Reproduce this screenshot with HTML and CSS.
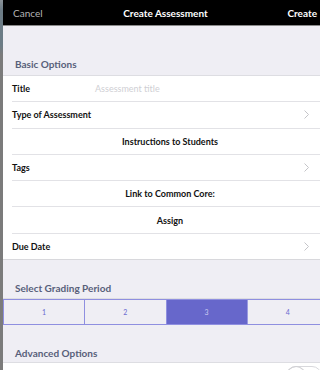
FILE: index.html
```html
<!DOCTYPE html>
<html lang="en">
<head>
  <meta charset="UTF-8">
  <title>Create Assessment</title>
  <link rel="stylesheet" href="styles.css">
</head>
<body>
  <div class="edge"></div>
  <div class="sheet">
    <header class="navbar">
      <span class="nav-cancel">Cancel</span>
      <span class="nav-title">Create Assessment</span>
      <span class="nav-action">Create</span>
    </header>

    <h2 class="section-title first">Basic Options</h2>
    <div class="group">
      <div class="row">
        <span class="label">Title</span>
        <span class="placeholder">Assessment title</span>
      </div>
      <div class="row link">
        <span class="label">Type of Assessment</span>
        <svg class="chevron" width="5" height="9" viewBox="0 0 5 9"><polyline points="0.5,0.5 4.5,4.5 0.5,8.5" /></svg>
      </div>
      <div class="row center"><span class="label">Instructions to Students</span></div>
      <div class="row link">
        <span class="label">Tags</span>
        <svg class="chevron" width="5" height="9" viewBox="0 0 5 9"><polyline points="0.5,0.5 4.5,4.5 0.5,8.5" /></svg>
      </div>
      <div class="row center"><span class="label">Link to Common Core:</span></div>
      <div class="row center"><span class="label">Assign</span></div>
      <div class="row link">
        <span class="label">Due Date</span>
        <svg class="chevron" width="5" height="9" viewBox="0 0 5 9"><polyline points="0.5,0.5 4.5,4.5 0.5,8.5" /></svg>
      </div>
    </div>

    <h2 class="section-title">Select Grading Period</h2>
    <div class="segments">
      <div class="segment">1</div>
      <div class="segment">2</div>
      <div class="segment active">3</div>
      <div class="segment">4</div>
    </div>

    <h2 class="section-title advanced">Advanced Options</h2>
    <div class="group">
      <div class="row toggle-row">
        <span class="toggle"><span class="knob"></span></span>
      </div>
    </div>
  </div>
</body>
</html>
```

FILE: styles.css
```css
html, body {
  margin: 0;
  height: 100%;
  overflow: hidden;
}
body {
  display: flex;
  font-family: Lato, "Open Sans", sans-serif;
  background: #efeef4;
  color: #111;
}
.edge {
  width: 3px;
  flex: none;
  background: linear-gradient(#8a9298 0, #6c7c86 10px, #6c7c86 45px, #7b7b7b 55px);
}
.sheet {
  flex: none;
  width: 325px;
  background: #efeef4;
}
.navbar {
  display: grid;
  grid-template-columns: 1fr auto 1fr;
  align-items: center;
  height: 26px;
  background: #000;
  border-bottom: 1px solid #8a8a8a;
  box-sizing: border-box;
  font-size: 10px;
  white-space: nowrap;
}
.nav-cancel {
  color: #b5b5b5;
  padding-left: 10px;
}
.nav-title {
  color: #fff;
  font-weight: bold;
}
.nav-action {
  justify-self: end;
  color: #fff;
  font-weight: bold;
  margin-right: 11px;
}
.section-title {
  margin: 0;
  padding: 22px 0 4px 12px;
  font-size: 10px;
  line-height: 12px;
  font-weight: bold;
  color: #58607a;
  border-bottom: 1px solid #dddde2;
}
.section-title.first {
  padding: 32px 0 5px 12px;
}
.section-title.advanced {
  padding: 22px 0 3px 12px;
}
.group {
  background: #fff;
  border-bottom: 1px solid #d8d8dc;
}
.row {
  display: flex;
  align-items: center;
  height: 25.3px;
  margin-left: 9px;
  padding-right: 19px;
  border-bottom: 1px solid #e2e2e6;
  font-size: 9px;
}
.row:last-child {
  border-bottom: none;
}
.row.center {
  justify-content: center;
  padding-right: 0;
}
.label {
  font-weight: bold;
  width: 82px;
}
.row.link .label {
  width: auto;
  flex: 1;
}
.row.center .label {
  width: auto;
}
.placeholder {
  color: #cfcfd4;
  padding-left: 1px;
}
.chevron {
  fill: none;
  stroke: #c4c4c8;
  stroke-width: 1;
}
.segments {
  display: flex;
  height: 26px;
  border: 1px solid #8f8fe0;
  border-right: none;
  box-sizing: border-box;
}
.segment {
  flex: 1;
  display: flex;
  align-items: center;
  justify-content: center;
  border-right: 1px solid #8f8fe0;
  font-size: 7px;
  color: #6a6ad0;
}
.segment.active {
  background: #6767cb;
  color: #c8c8f0;
  border-right-color: #9a9ae0;
}
.segment:last-child {
  border-right: none;
}
.toggle-row {
  align-items: flex-start;
  justify-content: flex-end;
  padding-right: 6px;
  height: 40px;
}
.toggle {
  display: flex;
  width: 34px;
  height: 18px;
  margin-top: 3px;
  border: 1px solid #d8d8dc;
  border-radius: 10px;
}
.knob {
  width: 18px;
  height: 18px;
  border-radius: 50%;
  box-shadow: 0 0 0 1px #d0d0d4;
}
```
